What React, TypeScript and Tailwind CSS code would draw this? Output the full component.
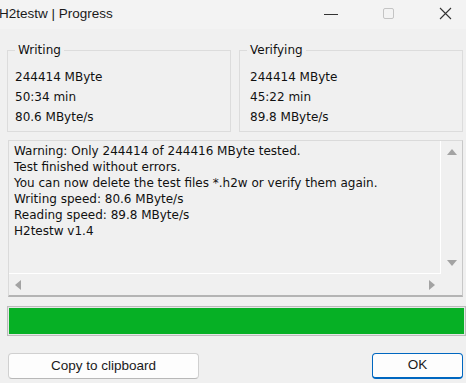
import React from 'react'

const mono = { fontFamily: '"DejaVu Sans", sans-serif' }

function GroupBox({ title, lines, wide }: { title: string; lines: string[]; wide?: boolean }) {
  return (
    <fieldset
      className={`w-[224px] border border-[#dcdcdc] pr-[7px] pt-[9px] pb-[4px] m-0 min-w-0 ${wide ? 'pl-[10px]' : 'pl-[7px]'}`}
    >
      <legend className={`px-[3px] text-[12px] leading-[15px] text-[#111] ${wide ? '-ml-[3px]' : 'ml-0'}`}>{title}</legend>
      {lines.map((l) => (
        <div key={l} className="text-[12px] leading-[20px] text-[#111]">
          {l}
        </div>
      ))}
    </fieldset>
  )
}

function Tri({ dir }: { dir: 'up' | 'down' | 'left' | 'right' }) {
  const pts = {
    up: '0,6 5,0 10,6',
    down: '0,0 10,0 5,6',
    left: '6,0 6,10 0,5',
    right: '0,0 0,10 6,5',
  }[dir]
  const vert = dir === 'up' || dir === 'down'
  return (
    <svg width={vert ? 10 : 6} height={vert ? 6 : 10} viewBox={vert ? '0 0 10 6' : '0 0 6 10'}>
      <polygon points={pts} fill="#a3a3a3" />
    </svg>
  )
}

export default function App() {
  const log = [
    'Warning: Only 244414 of 244416 MByte tested.',
    'Test finished without errors.',
    'You can now delete the test files *.h2w or verify them again.',
    'Writing speed: 80.6 MByte/s',
    'Reading speed: 89.8 MByte/s',
    'H2testw v1.4',
  ]

  return (
    <div
      className="w-[466px] h-[383px] bg-[#f0f0f0] overflow-hidden flex flex-col"
      style={{ fontFamily: '"Liberation Sans", Arial, sans-serif' }}
    >
      {/* title bar */}
      <div className="h-[29px] shrink-0 bg-[#f3f3f3] flex items-center">
        <span className="-ml-[1px] text-[13.5px] text-[#1a1a1a] leading-none pb-[2px]">H2testw | Progress</span>
        <div className="ml-auto flex items-center h-full">
          <div className="w-[14px] h-px bg-[#333] mr-[45px]" />
          <div className="w-[11px] h-[11px] border border-[#c4c4c4] rounded-[2px] mr-[45px] mb-[2px]" />
          <svg width="13" height="13" viewBox="0 0 13 13" className="mr-[14px] mb-[2px]">
            <path d="M1 1 L12 12 M12 1 L1 12" stroke="#333" strokeWidth="1.1" />
          </svg>
        </div>
      </div>

      <div style={mono}>
        {/* group boxes */}
        <div className="flex gap-[8px] pl-[7px] mt-[14px]">
          <GroupBox title="Writing" lines={['244414 MByte', '50:34 min', '80.6 MByte/s']} />
          <GroupBox title="Verifying" wide lines={['244414 MByte', '45:22 min', '89.8 MByte/s']} />
        </div>

        {/* log box */}
        <div className="ml-[8px] mt-[8px] w-[455px] h-[157px] border border-[#dadada] border-b-2 border-b-[#b4b4b4] border-r-[#c8c8c8] grid grid-cols-[1fr_21px] grid-rows-[1fr_21px]">
          <div className="border-r border-b border-white pl-[5px] pt-[2px]">
            {log.map((l) => (
              <div key={l} className="text-[12px] leading-[16px] text-[#111] whitespace-nowrap">
                {l}
              </div>
            ))}
          </div>
          <div className="flex flex-col items-center justify-between pt-[8px] pb-[8px] pl-[1px]">
            <Tri dir="up" />
            <Tri dir="down" />
          </div>
          <div className="flex items-center justify-between pl-[6px] pr-[6px]">
            <Tri dir="left" />
            <Tri dir="right" />
          </div>
          <div />
        </div>

        {/* progress bar */}
        <div className="ml-[7px] mt-[9px] w-[459px] h-[30px] border border-[#bcbcbc] bg-[#e6e6e6] p-px">
          <div className="h-full w-full bg-[#06b025]" />
        </div>
      </div>

      {/* buttons */}
      <div className="flex items-center justify-between pl-[8px] pr-[3px] mt-[17px]">
        <button className="w-[191px] h-[26px] bg-[#fdfdfd] border border-[#d0d0d0] border-b-[#b8b8b8] rounded-[4px] text-[13.5px] text-[#1a1a1a]">
          Copy to clipboard
        </button>
        <button className="w-[91px] h-[26px] bg-[#fdfdfd] border border-[#0067c0] border-b-2 rounded-[4px] text-[13.5px] text-[#1a1a1a]">
          OK
        </button>
      </div>
    </div>
  )
}
